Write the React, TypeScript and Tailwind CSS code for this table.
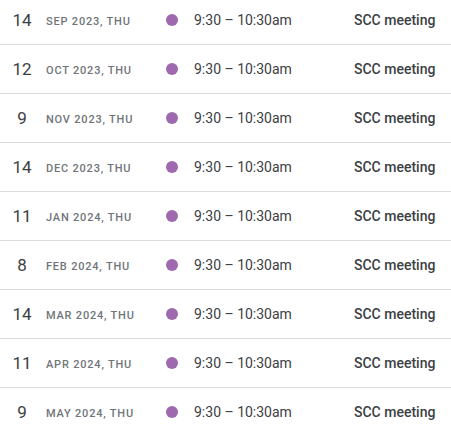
import React from "react";

const rows = [
  ["14", "Sep 2023, Thu"],
  ["12", "Oct 2023, Thu"],
  ["9", "Nov 2023, Thu"],
  ["14", "Dec 2023, Thu"],
  ["11", "Jan 2024, Thu"],
  ["8", "Feb 2024, Thu"],
  ["14", "Mar 2024, Thu"],
  ["11", "Apr 2024, Thu"],
  ["9", "May 2024, Thu"],
];

export default function App() {
  return (
    <div
      className="w-[451px] h-[430px] overflow-hidden bg-white"
      style={{ fontFamily: "Roboto, 'Liberation Sans', sans-serif" }}
    >
      <div className="-mt-1">
        {rows.map(([d, m], i) => (
          <div
            key={i}
            className="flex items-center h-[49px] border-b border-[#dadce0]"
          >
            <div className="w-[44px] text-center text-[17px] text-[#3c4043] leading-none">
              {d}
            </div>
            <div className="w-[120px] pl-[2px] pt-[5px] uppercase text-[11px] font-medium tracking-[0.8px] text-[#70757a]">
              {m}
            </div>
            <div className="w-[30px] flex items-center">
              <div className="w-[12px] h-[12px] rounded-full bg-[#9e69af] ml-[2px]" />
            </div>
            <div className="w-[160px] text-[14px] text-[#3c4043]">
              9:30 – 10:30am
            </div>
            <div className="text-[14px] font-medium text-[#3c4043]">
              SCC meeting
            </div>
          </div>
        ))}
      </div>
    </div>
  );
}
